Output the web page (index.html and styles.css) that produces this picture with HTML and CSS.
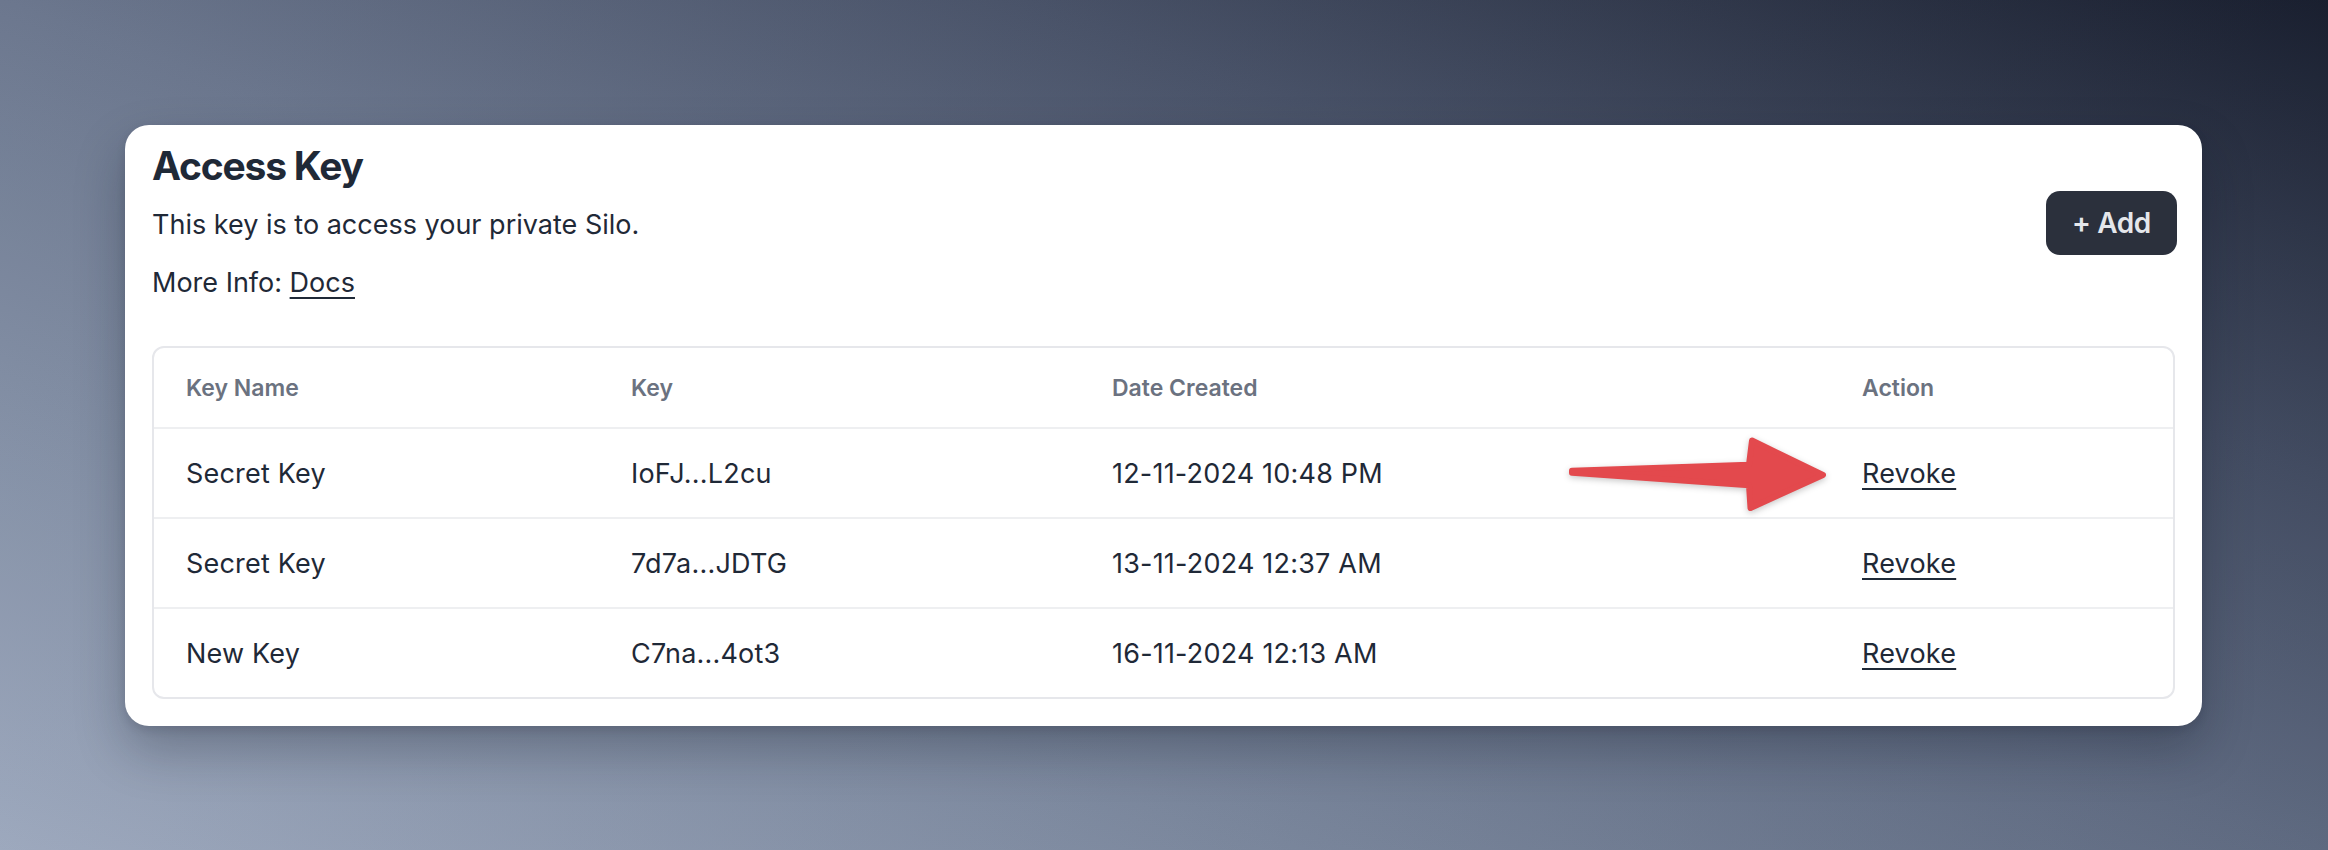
FILE: index.html
```html
<!DOCTYPE html>
<html lang="en">
<head>
<meta charset="utf-8">
<title>Access Key</title>
<link rel="stylesheet" href="styles.css">
</head>
<body>
<main class="page">
  <section class="card">
    <header class="card-head">
      <div class="intro">
        <h1 class="title">Access Key</h1>
        <p class="desc">This key is to access your private Silo.</p>
        <p class="desc more">More Info: <a class="link" href="#">Docs</a></p>
      </div>
      <button class="add-btn" type="button">+ Add</button>
    </header>
    <div class="table-wrap">
      <table class="keys">
        <colgroup>
          <col class="c1"><col class="c2"><col class="c3"><col class="c4">
        </colgroup>
        <thead>
          <tr><th>Key Name</th><th>Key</th><th>Date Created</th><th>Action</th></tr>
        </thead>
        <tbody>
          <tr><td>Secret Key</td><td>IoFJ...L2cu</td><td>12-11-2024 10:48 PM</td><td><a class="link" href="#">Revoke</a></td></tr>
          <tr><td>Secret Key</td><td>7d7a...JDTG</td><td>13-11-2024 12:37 AM</td><td><a class="link" href="#">Revoke</a></td></tr>
          <tr><td>New Key</td><td>C7na...4ot3</td><td>16-11-2024 12:13 AM</td><td><a class="link" href="#">Revoke</a></td></tr>
        </tbody>
      </table>
    </div>
    <svg class="arrow" width="270" height="90" viewBox="0 0 270 90" aria-hidden="true">
      <path d="M7 40.7 L184 34.7 L187 10.5 L258 45 L185.5 78 L184 55.3 L7 42.7 Z" fill="#e3494d" stroke="#e3494d" stroke-width="6" stroke-linejoin="round"/>
    </svg>
  </section>
</main>
</body>
</html>
```
FILE: styles.css
```css
html, body {
  margin: 0;
  padding: 0;
}
body {
  width: 2328px;
  height: 850px;
  overflow: hidden;
  font-family: "Inter", "Noto Sans", sans-serif;
  background:
    linear-gradient(to right, rgba(255, 255, 255, 0.05), rgba(0, 0, 0, 0.06)),
    linear-gradient(to top right, #98a4ba 0%, #7a879e 28%, #647088 50%, #465067 72%, #1b2132 100%);
  color: #1f2937;
}
.page {
  padding: 125px 126px 0 125px;
}
.card {
  position: relative;
  background: #ffffff;
  border-radius: 24px;
  padding: 17px 27px 27px 27px;
  box-shadow: 0 24px 50px rgba(15, 20, 35, 0.28), 0 4px 10px rgba(15, 20, 35, 0.12);
}
.card-head {
  display: flex;
  align-items: center;
  justify-content: space-between;
}
.title {
  margin: 0;
  font-size: 39px;
  line-height: 48px;
  font-weight: 700;
  color: #1f2937;
  letter-spacing: -1.2px;
}
.desc {
  margin: 15px 0 0 0;
  font-size: 27px;
  line-height: 40px;
  color: #1f2937;
}
.desc.more {
  margin-top: 18px;
}
.link {
  color: #1f2937;
  text-decoration: underline;
  text-underline-offset: 5px;
  text-decoration-thickness: 2px;
}
.add-btn {
  width: 131px;
  height: 64px;
  margin-right: -2px;
  border: none;
  border-radius: 14px;
  background: #2b303c;
  color: #e5e7eb;
  font-family: "Inter", "Noto Sans", sans-serif;
  font-size: 28px;
  font-weight: 600;
  letter-spacing: -0.4px;
  padding: 0;
}
.table-wrap {
  margin-top: 43px;
  border: 2px solid #e6e7eb;
  border-radius: 12px;
  overflow: hidden;
}
.keys {
  width: 100%;
  border-collapse: collapse;
  table-layout: fixed;
}
.c1 { width: 445px; }
.c2 { width: 481px; }
.c3 { width: 750px; }
.keys th {
  height: 79px;
  padding: 0 0 0 32px;
  text-align: left;
  font-size: 23px;
  font-weight: 600;
  color: #6b7280;
  border-bottom: 2px solid #eeeff1;
}
.keys td {
  height: 88px;
  padding: 0 0 0 32px;
  font-size: 27px;
  letter-spacing: 0.2px;
  color: #1f2937;
  border-bottom: 2px solid #eeeff1;
}
.keys tbody tr:last-child td {
  border-bottom: none;
}
.arrow {
  position: absolute;
  left: 1440px;
  top: 305px;
  filter: drop-shadow(0 2px 3px rgba(0, 0, 0, 0.22));
}
```
